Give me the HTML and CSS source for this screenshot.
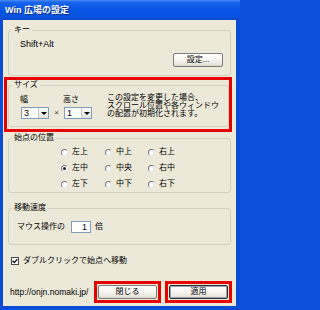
FILE: index.html
```html
<!DOCTYPE html>
<html lang="ja">
<head>
<meta charset="utf-8">
<title>Win 広場の設定</title>
<link rel="stylesheet" href="styles.css">
</head>
<body>
<div class="window">
  <div class="titlebar"><span class="title">Win 広場の設定</span></div>
  <div class="client">
    <fieldset class="group group-key">
      <legend>キー</legend>
      <div class="key-body">
        <div class="key-text">Shift+Alt</div>
        <div class="key-actions"><button class="btn btn-set">設定...</button></div>
      </div>
    </fieldset>

    <div class="mark mark-size">
      <fieldset class="group group-size">
        <legend>サイズ</legend>
        <div class="size-body">
          <div class="size-field">
            <span class="size-label">幅</span>
            <div class="combo"><span class="combo-value">3</span><span class="combo-arrow"><span class="tri"></span></span></div>
          </div>
          <span class="times">×</span>
          <div class="size-field">
            <span class="size-label">高さ</span>
            <div class="combo"><span class="combo-value">1</span><span class="combo-arrow"><span class="tri"></span></span></div>
          </div>
          <p class="size-note">この設定を変更した場合、<br>スクロール位置や各ウィンドウ<br>の配置が初期化されます。</p>
        </div>
      </fieldset>
    </div>

    <fieldset class="group group-start">
      <legend>始点の位置</legend>
      <div class="start-grid">
        <span class="opt"><span class="radio"></span>左上</span>
        <span class="opt"><span class="radio"></span>中上</span>
        <span class="opt"><span class="radio"></span>右上</span>
        <span class="opt"><span class="radio checked"></span>左中</span>
        <span class="opt"><span class="radio"></span>中央</span>
        <span class="opt"><span class="radio"></span>右中</span>
        <span class="opt"><span class="radio"></span>左下</span>
        <span class="opt"><span class="radio"></span>中下</span>
        <span class="opt"><span class="radio"></span>右下</span>
      </div>
    </fieldset>

    <fieldset class="group group-speed">
      <legend>移動速度</legend>
      <div class="speed-body">
        <span>マウス操作の</span>
        <span class="num-box">1</span>
        <span>倍</span>
      </div>
    </fieldset>

    <div class="check-row">
      <span class="checkbox"><svg width="6" height="6" viewBox="0 0 6 6"><path d="M0.6 2.8 L2.3 4.5 L5.4 1.2" fill="none" stroke="#1a1a1a" stroke-width="1.3"/></svg></span>
      <span>ダブルクリックで始点へ移動</span>
    </div>

    <div class="bottom-row">
      <span class="url">http://onjn.nomaki.jp/</span>
      <div class="mark mark-btn"><button class="btn btn-foot">閉じる</button></div>
      <div class="mark mark-btn"><button class="btn btn-foot btn-default">適用</button></div>
    </div>
  </div>
</div>
</body>
</html>
```
FILE: styles.css
```css
* { box-sizing: border-box; }
html, body { margin: 0; padding: 0; }
body {
  width: 240px;
  height: 310px;
  overflow: hidden;
  background: #0B4FDB;
  font-family: "Liberation Sans", "Noto Sans CJK JP", sans-serif;
  font-size: 8px;
  line-height: 10px;
  color: #000;
}
.window {
  width: 240px;
  height: 310px;
  display: flex;
  flex-direction: column;
  background: #0A4CD6;
}
.titlebar {
  height: 20px;
  flex: none;
  display: flex;
  align-items: center;
  padding: 0 0 0 5px;
  background: linear-gradient(to bottom, #4A8CF5 0%, #1864EC 12%, #0A58E6 40%, #0655E2 70%, #0A4FD6 92%, #0847C8 100%);
}
.title {
  color: #fff;
  font-weight: bold;
  font-size: 9px;
  line-height: 12px;
  text-shadow: 1px 1px 0 #0A2A8C;
  white-space: nowrap;
}
.client {
  flex: 1;
  margin: 0 4px 4px 3px;
  background: #ECE9D8;
  display: flex;
  flex-direction: column;
}

/* group boxes */
.group {
  margin: 0 5px;
  padding: 0;
  border: 1px solid #D0D0BF;
  border-radius: 3px;
  min-width: 0;
}
.group legend {
  margin-left: 3px;
  padding: 0 2px;
  font-size: 8px;
  line-height: 10px;
}

/* key */
.group-key { margin-top: 5px; }
.key-body {
  padding: 4px 7px 8px 11px;
  display: flex;
  flex-direction: column;
}
.key-text { font-size: 9px; line-height: 10px; }
.key-actions {
  margin-top: 4px;
  display: flex;
  justify-content: flex-end;
}

/* buttons */
.btn {
  margin: 0;
  padding: 0;
  font-family: inherit;
  font-size: 8px;
  line-height: 12px;
  color: #000;
  border: 1px solid #7B7B7B;
  border-radius: 2px;
  background: linear-gradient(to bottom, #FFFFFF 0%, #F6F5F0 45%, #ECEAE0 80%, #D8D4C8 100%);
  display: flex;
  align-items: center;
  justify-content: center;
}
.btn-set { width: 50px; height: 14px; }
.btn-foot { width: 59px; height: 14px; }
.btn-default {
  border-color: #2B2B2B;
  box-shadow: inset 0 0 0 1px #9AA6BE;
}

/* red annotation frames */
.mark {
  border: 3px solid #E60000;
}
.mark-size {
  margin: 1px 4px 0 1px;
  padding: 0 0 2px 0;
}
.group-size { margin: 0 0 0 1px; }
.mark-btn { padding: 1px; }

/* size */
.size-body {
  padding: 5px 0 7px 12px;
  display: flex;
  align-items: flex-start;
}
.size-field {
  display: flex;
  flex-direction: column;
  width: 28px;
}
.size-label { line-height: 10px; margin-left: -1px; }
.combo {
  margin-top: 2px;
  width: 28px;
  height: 12px;
  border: 1px solid #7F9DB9;
  background: #fff;
  display: flex;
}
.combo-value {
  flex: 1;
  padding-left: 2px;
  font-size: 9px;
  line-height: 10px;
}
.combo-arrow {
  width: 10px;
  border-left: 1px solid #C4C4BC;
  background: linear-gradient(to bottom, #FAFAF8, #E2E2DA);
  display: flex;
  align-items: center;
  justify-content: center;
}
.tri {
  width: 0;
  height: 0;
  border-left: 3px solid transparent;
  border-right: 3px solid transparent;
  border-top: 3px solid #000;
}
.times {
  align-self: flex-end;
  width: 15px;
  text-align: center;
  line-height: 12px;
  color: #333;
}
.size-note {
  margin: -1px 0 0 15px;
  line-height: 8px;
  white-space: nowrap;
}

/* start position */
.group-start { margin-top: 1px; }
.start-grid {
  padding: 4px 0 3px 52px;
  display: grid;
  grid-template-columns: 44px 43px 43px;
  row-gap: 6px;
}
.opt {
  display: flex;
  align-items: center;
  gap: 4px;
  line-height: 10px;
}
.radio {
  width: 7px;
  height: 7px;
  flex: none;
  border-radius: 50%;
  border: 1px solid;
  border-color: #7A7A7A #E2E2E2 #E2E2E2 #7A7A7A;
  background: #fff;
  display: flex;
  align-items: center;
  justify-content: center;
}
.radio.checked::after {
  content: "";
  width: 3px;
  height: 3px;
  border-radius: 50%;
  background: #1E1E1E;
}

/* speed */
.group-speed { margin-top: 10px; }
.speed-body {
  padding: 8px 0 11px 8px;
  display: flex;
  align-items: center;
}
.num-box {
  margin: 0 4px 0 6px;
  width: 20px;
  height: 12px;
  border: 1px solid #7F9DB9;
  background: #fff;
  text-align: right;
  padding-right: 3px;
  font-size: 9px;
  line-height: 10px;
}

/* checkbox */
.check-row {
  margin-top: 11px;
  padding-left: 8px;
  display: flex;
  align-items: center;
  gap: 4px;
  line-height: 10px;
}
.checkbox {
  width: 8px;
  height: 8px;
  border: 1px solid #4A4A4A;
  background: #fff;
  display: flex;
  align-items: center;
  justify-content: center;
}
.checkbox svg { display: block; }

/* bottom */
.bottom-row {
  margin-top: 15px;
  padding: 0 4px 0 7px;
  display: flex;
  align-items: center;
  gap: 4px;
}
.url {
  flex: 1;
  font-size: 8.5px;
  white-space: nowrap;
}
```
